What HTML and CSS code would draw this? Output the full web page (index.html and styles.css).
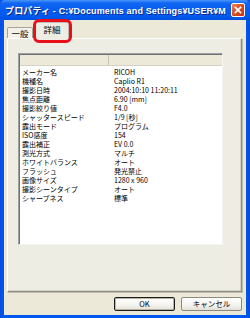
FILE: index.html
```html
<!DOCTYPE html>
<html lang="ja">
<head>
<meta charset="utf-8">
<link rel="stylesheet" href="styles.css">
</head>
<body>
<div class="window">
  <div class="titlebar">
    <span class="title">プロパティ - C:¥Documents and Settings¥USER¥M</span>
    <span class="close">
      <svg width="14" height="14" viewBox="0 0 14 14"><path d="M4 4 L10 10 M10 4 L4 10" stroke="#fff" stroke-width="2" stroke-linecap="square"/></svg>
    </span>
  </div>
  <div class="client">
    <div class="tabs">
      <div class="tab">一般</div>
      <div class="tab active">詳細</div>
      <div class="mark"></div>
    </div>
    <div class="panel">
      <div class="list">
        <div class="header"><span class="h1"></span><span class="h2"></span></div>
        <div class="rows">
          <div class="row"><span class="k">メーカー名</span><span class="v">RICOH</span></div>
          <div class="row"><span class="k">機種名</span><span class="v">Caplio R1</span></div>
          <div class="row"><span class="k">撮影日時</span><span class="v">2004:10:10 11:20:11</span></div>
          <div class="row"><span class="k">焦点距離</span><span class="v">6.90 [mm]</span></div>
          <div class="row"><span class="k">撮影絞り値</span><span class="v">F4.0</span></div>
          <div class="row"><span class="k">シャッタースピード</span><span class="v">1/9 [秒]</span></div>
          <div class="row"><span class="k">露出モード</span><span class="v">プログラム</span></div>
          <div class="row"><span class="k">ISO感度</span><span class="v">154</span></div>
          <div class="row"><span class="k">露出補正</span><span class="v">EV 0.0</span></div>
          <div class="row"><span class="k">測光方式</span><span class="v">マルチ</span></div>
          <div class="row"><span class="k">ホワイトバランス</span><span class="v">オート</span></div>
          <div class="row"><span class="k">フラッシュ</span><span class="v">発光禁止</span></div>
          <div class="row"><span class="k">画像サイズ</span><span class="v">1280 x 960</span></div>
          <div class="row"><span class="k">撮影シーンタイプ</span><span class="v">オート</span></div>
          <div class="row"><span class="k">シャープネス</span><span class="v">標準</span></div>
        </div>
      </div>
    </div>
    <div class="buttons">
      <div class="btn default">OK</div>
      <div class="btn">キャンセル</div>
    </div>
  </div>
</div>
</body>
</html>
```
FILE: styles.css
```css
* { box-sizing: border-box; }
html, body { margin: 0; padding: 0; }
body {
  width: 250px;
  height: 318px;
  overflow: hidden;
  font-family: "Noto Sans CJK JP", "Liberation Sans", sans-serif;
}
.window {
  width: 250px;
  height: 318px;
  display: flex;
  flex-direction: column;
  background: linear-gradient(to right, #0A4FE0 0, #0058EE 4px, #0058EE 246px, #0A4AD8 250px);
}
.titlebar {
  height: 20px;
  flex: none;
  display: flex;
  align-items: center;
  justify-content: space-between;
  padding: 0 5px 0 5px;
  background: linear-gradient(to bottom, #4A96FA 0, #1266F2 3px, #065CF0 10px, #0058EC 17px, #0050DE 20px);
  border-radius: 5px 5px 0 0;
}
.title {
  color: #fff;
  font-family: "Liberation Sans", "Noto Sans CJK JP", sans-serif;
  font-weight: bold;
  font-size: 9px;
  letter-spacing: 0.15px;
  white-space: nowrap;
  text-shadow: 1px 1px 0 #0A2A8A;
}
.close {
  width: 14px;
  height: 14px;
  border: 1px solid #fff;
  border-radius: 2px;
  background: linear-gradient(135deg, #E9835F 0, #D94A20 50%, #C43510 100%);
  display: flex;
  align-items: center;
  justify-content: center;
}
.close svg { display: block; }
.client {
  flex: 1;
  margin: 0 4px 3px 4px;
  background: #ECE9D8;
  display: flex;
  flex-direction: column;
  padding: 0 4px 4px 3px;
}
.tabs {
  height: 18px;
  flex: none;
  display: flex;
  align-items: flex-end;
  position: relative;
  font-size: 8.5px;
  color: #000;
}
.tab {
  height: 11px;
  width: 26px;
  border: 1px solid #A5A59A;
  border-bottom: none;
  border-radius: 2px 2px 0 0;
  background: #F3F2EA;
  display: flex;
  align-items: center;
  justify-content: center;
  line-height: 1;
}
.tab.active {
  height: 17px;
  width: 34px;
  margin-left: 2px;
  margin-bottom: -1px;
  background: #EEEDE4;
  border-color: #BDBDB2;
  position: relative;
  z-index: 2;
  padding-bottom: 3px;
}
.mark {
  position: absolute;
  left: 26px;
  top: -1px;
  width: 39px;
  height: 24px;
  border: 3px solid #E8101A;
  border-radius: 6px;
  z-index: 5;
}
.panel {
  flex: none;
  height: 254px;
  background: #EEEDE4;
  border-top: 1px solid #FFFFFF;
  border-left: 1px solid #FFFFFF;
  border-right: 1px solid #8E8E86;
  border-bottom: 1px solid #8E8E86;
  box-shadow: 1px 1px 0 #BDBBB0, inset -1px -1px 0 #D4D2C6;
  padding: 14px 18px 0 10px;
}
.list {
  height: 192px;
  background: #fff;
  border-top: 1px solid #A0A0A0;
  border-left: 1px solid #A0A0A0;
  border-right: 1px solid #F4F4F0;
  border-bottom: 1px solid #F4F4F0;
  box-shadow: inset 1px 1px 0 #707070;
  display: flex;
  flex-direction: column;
}
.header {
  height: 11px;
  flex: none;
  display: flex;
  background: #ECE9D8;
  border-bottom: 1px solid #D6D2C2;
  margin: 1px 0 0 1px;
}
.h1 {
  width: 89px;
  border-right: 1px solid #C7C5B2;
}
.h2 { flex: 1; }
.rows {
  padding-top: 2px;
  font-size: 7px;
  color: #000;
}
.row {
  height: 9px;
  display: flex;
  align-items: center;
  line-height: 1;
  white-space: nowrap;
}
.k {
  width: 95px;
  padding-left: 3px;
  flex: none;
}
.v { flex: 1; }
.buttons {
  flex: 1;
  display: flex;
  justify-content: flex-end;
  align-items: flex-start;
  padding-top: 5px;
  gap: 6px;
}
.btn {
  width: 61px;
  height: 14px;
  border: 1px solid #8A8A80;
  border-radius: 2px;
  background: linear-gradient(to bottom, #FFFFFF 0, #F4F3EE 60%, #E2E0D4 100%);
  font-size: 7.5px;
  display: flex;
  align-items: center;
  justify-content: center;
  line-height: 1;
  color: #000;
}
.btn.default {
  border: 1px solid #1C1C1C;
  box-shadow: inset 0 0 0 1px #B9B6A6;
}
```
